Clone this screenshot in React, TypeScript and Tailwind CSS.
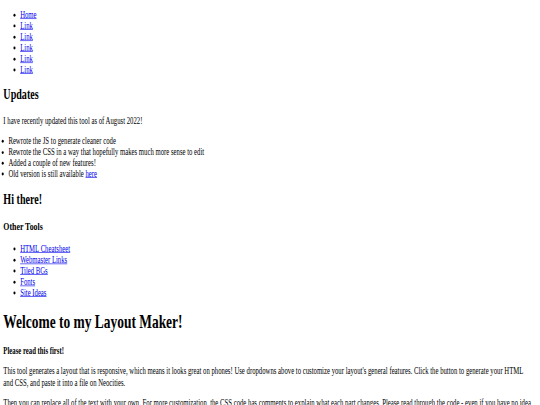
const navLinks = ["Home", "Link", "Link", "Link", "Link", "Link"];
const toolLinks = ["HTML Cheatsheet", "Webmaster Links", "Tiled BGs", "Fonts", "Site Ideas"];

// page is an unstyled html doc shot at ~1286x681 and squashed into 540x405,
// so lay it out at full size and scale the whole thing down
export default function App() {
  return (
    <div className="h-[405px] w-[540px] overflow-hidden bg-white">
      <div className="flow-root h-[681px] w-[1286px] origin-top-left scale-x-[0.42] scale-y-[0.595] px-2 font-['Liberation_Serif',serif] text-[16px] leading-[1.15] text-black">
        <nav>
          <ul className="my-4 list-disc pl-10">
            {navLinks.map((l, i) => (
              <li key={i}>
                <a href="#" className="text-[#0000ee] underline">
                  {l}
                </a>
              </li>
            ))}
          </ul>
        </nav>

        <aside>
          <h2 className="my-[0.83em] text-[1.5em] font-bold">Updates</h2>
          <p className="my-4">I have recently updated this tool as of August 2022!</p>
          <ul className="my-4 list-disc pl-3">
            <li>Rewrote the JS to generate cleaner code</li>
            <li>Rewrote the CSS in a way that hopefully makes much more sense to edit</li>
            <li>Added a couple of new features!</li>
            <li>
              Old version is still available{" "}
              <a href="#" className="text-[#0000ee] underline">
                here
              </a>
            </li>
          </ul>
          <h2 className="my-[0.83em] text-[1.5em] font-bold">Hi there!</h2>
          <h3 className="my-[1em] text-[1.17em] font-bold">Other Tools</h3>
          <ul className="my-4 list-disc pl-10">
            {toolLinks.map((l) => (
              <li key={l}>
                <a href="#" className="text-[#0000ee] underline">
                  {l}
                </a>
              </li>
            ))}
          </ul>
        </aside>

        <main>
          <h1 className="my-[0.67em] text-[2em] font-bold">Welcome to my Layout Maker!</h1>
          <p className="my-4 font-bold">Please read this first!</p>
          <p className="my-4">
            This tool generates a layout that is responsive, which means it looks great on phones! Use
            dropdowns above to customize your layout's general features. Click the button to generate
            your HTML
            <br />
            and CSS, and paste it into a file on Neocities.
          </p>
          <p className="my-4">
            Then you can replace all of the text with your own. For more customization, the CSS code has
            comments to explain what each part changes. Please read through the code - even if you have
            no idea what you're doing, you might learn something!
          </p>
        </main>
      </div>
    </div>
  );
}
